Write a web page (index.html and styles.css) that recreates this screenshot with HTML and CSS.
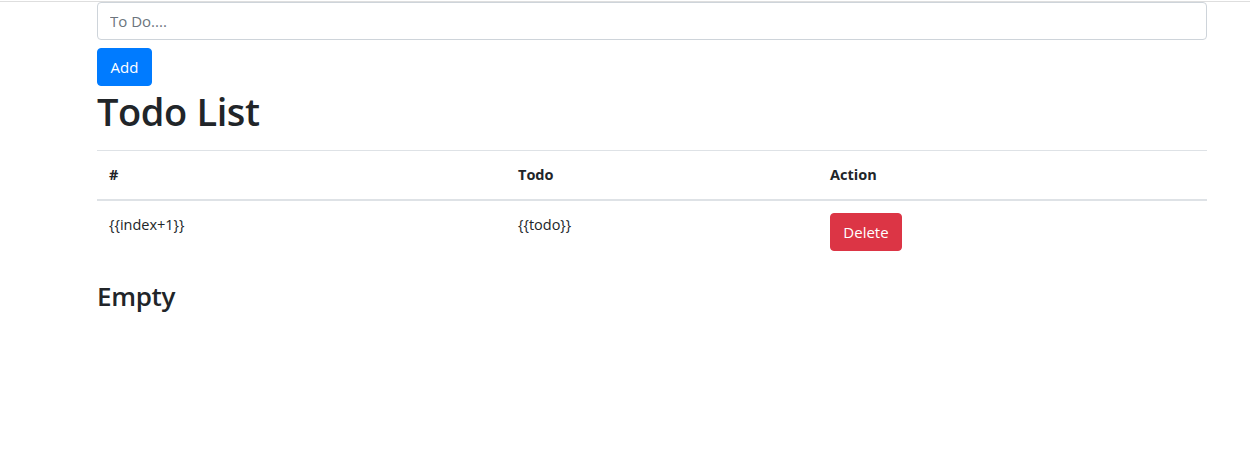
FILE: index.html
```html
<!DOCTYPE html>
<html>
<head>
<meta charset="utf-8">
<link rel="stylesheet" href="styles.css">
</head>
<body>
<div class="topline"></div>
<div class="container">
  <input class="form-control" type="text" placeholder="To Do....">
  <button class="btn btn-primary">Add</button>
  <h1 class="title">Todo List</h1>
  <table class="table">
    <thead>
      <tr><th class="c1">#</th><th class="c2">Todo</th><th class="c3">Action</th></tr>
    </thead>
    <tbody>
      <tr><td>{{index+1}}</td><td>{{todo}}</td><td><button class="btn btn-danger">Delete</button></td></tr>
    </tbody>
  </table>
  <h3 class="empty">Empty</h3>
</div>
</body>
</html>
```
FILE: styles.css
```css
html, body { margin: 0; padding: 0; }
body {
  font-family: "Open Sans", "Noto Sans", sans-serif;
  font-size: 16px;
  line-height: 1.5;
  color: #212529;
  background: #fff;
}
.topline {
  height: 0;
  margin-top: 1px;
  border-top: 1px solid #dedede;
}
.container {
  width: 1110px;
  margin-left: 97px;
  margin-top: 0;
}
.form-control {
  display: block;
  box-sizing: border-box;
  width: 100%;
  height: 38px;
  padding: 6px 12px;
  font: inherit;
  font-size: 15px;
  color: #495057;
  border: 1px solid #ced4da;
  border-radius: 4px;
  margin: 0 0 8px 0;
  outline: none;
}
.form-control::placeholder { color: #6c757d; }
.btn {
  display: inline-block;
  box-sizing: border-box;
  height: 38px;
  padding: 6px 12px;
  font: inherit;
  font-size: 15px;
  line-height: 24px;
  color: #fff;
  border: 1px solid transparent;
  border-radius: 4px;
  cursor: pointer;
  vertical-align: top;
}
.btn-primary { background: #007bff; border-color: #007bff; width: 55px; }
.btn-danger { background: #dc3545; border-color: #dc3545; width: 72px; }
.title {
  font-size: 38px;
  font-weight: 600;
  line-height: 50px;
  margin: 0 0 14px 0;
  letter-spacing: -0.4px;
}
.table {
  width: 100%;
  border-collapse: collapse;
  margin-bottom: 16px;
}
.table th, .table td {
  padding: 12px;
  text-align: left;
  vertical-align: top;
  border-top: 1px solid #dee2e6;
  font-size: 14.5px;
  line-height: 24px;
}
.table thead th {
  font-weight: 700;
  border-bottom: 2px solid #dee2e6;
  vertical-align: bottom;
}
.c1 { width: 385px; }
.c2 { width: 288px; }
.empty {
  font-size: 26px;
  font-weight: 600;
  line-height: 34px;
  margin: 0;
  letter-spacing: -0.3px;
}
```
